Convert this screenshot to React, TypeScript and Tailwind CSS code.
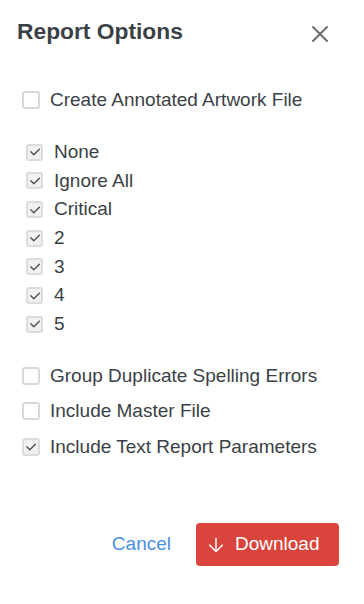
import { ArrowDown } from "lucide-react";

const levels = ["None", "Ignore All", "Critical", "2", "3", "4", "5"];

function Box({ checked, small }: { checked?: boolean; small?: boolean }) {
    return (
        <span
            className={`flex items-center justify-center rounded-[3px] border-2 ${small ? "w-[17px] h-[17px]" : "w-[18px] h-[18px]"} ${checked ? "bg-[#f1f1f2] border-[#dcdcde]" : "bg-white border-[#d6d8dc]"}`}
        >
            {checked && (
                <svg width="12" height="12" viewBox="0 0 12 12" fill="none">
                    <path d="M1.8 5.8 L4.8 8.8 L10.4 3.2" stroke="#4a4d53" strokeWidth="1.3" strokeLinecap="round" strokeLinejoin="round" />
                </svg>
            )}
        </span>
    );
}

export default function App() {
    return (
        <div className="w-[364px] h-[604px] bg-white flex flex-col text-[#3b3f46]" style={{ fontFamily: '"Liberation Sans", Arial, sans-serif' }}>
            <div className="flex items-start justify-between pl-[17px] pr-[36px] pt-[18px]">
                <h2 className="text-[22.8px] leading-[26px] font-bold">Report Options</h2>
                <svg className="mt-[8px]" width="16" height="16" viewBox="0 0 16 16" fill="none">
                    <path d="M1 1 L15 15 M15 1 L1 15" stroke="#6b6e74" strokeWidth="2" strokeLinecap="round" />
                </svg>
            </div>

            <div className="flex flex-col mt-[47px] pl-[22px]">
                <label className="flex items-center gap-[10px] h-[18px]">
                    <Box />
                    <span className="text-[19px]">Create Annotated Artwork File</span>
                </label>
            </div>

            <div className="flex flex-col mt-[29px] pl-[26px]">
                {levels.map((l) => (
                    <label key={l} className="flex items-center gap-[11px] h-[28.67px]">
                        <Box checked small />
                        <span className="text-[19px]">{l}</span>
                    </label>
                ))}
            </div>

            <div className="flex flex-col mt-[19.5px] pl-[22px]">
                {[
                    ["Group Duplicate Spelling Errors", false],
                    ["Include Master File", false],
                    ["Include Text Report Parameters", true],
                ].map(([t, c]) => (
                    <label key={t as string} className="flex items-center gap-[10px] h-[35.5px]">
                        <Box checked={c as boolean} />
                        <span className="text-[19px]">{t as string}</span>
                    </label>
                ))}
            </div>

            <div className="flex items-center justify-end gap-[25px] mt-auto mb-[38px] pr-[25px]">
                <button className="text-[19px] text-[#4a90e2]">Cancel</button>
                <button className="flex items-center gap-[8px] h-[43px] w-[143px] pl-[9px] rounded-[4px] bg-[#d9453c] text-white text-[19px]">
                    <ArrowDown size={22} strokeWidth={1.6} />
                    Download
                </button>
            </div>
        </div>
    );
}
